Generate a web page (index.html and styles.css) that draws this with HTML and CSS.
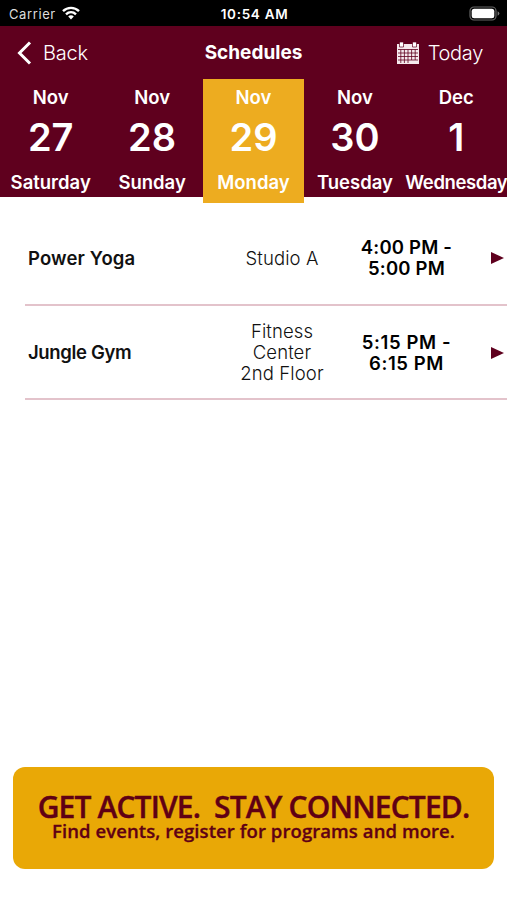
FILE: index.html
```
<!DOCTYPE html>
<html lang="en">
<head>
    <meta charset="UTF-8">
    <meta name="viewport" content="width=device-width, initial-scale=1.0">
    <title>Schedules</title>
    <link rel="stylesheet" href="styles.css">
</head>
<body>
    <div class="status-bar">
        <div class="carrier">
            <span>Carrier</span>
            <svg width="18" height="14" viewBox="0 0 18 14" fill="none" stroke="#fff" stroke-width="2.4">
                <path d="M1 5.2C5.5 .8 12.5 .8 17 5.2"/>
                <path d="M4 8.3C6.9 5.5 11.1 5.5 14 8.3"/>
                <path d="M6.2 10.4C7.8 8.9 10.2 8.9 11.8 10.4L9 13.4Z" fill="#fff" stroke="none"/>
            </svg>
        </div>
        <div class="clock">10:54 AM</div>
        <div class="battery">
            <svg width="31" height="15" viewBox="0 0 31 15">
                <rect x="1" y="1" width="26" height="13" rx="4" fill="none" stroke="#666" stroke-width="1.2"/>
                <rect x="2.7" y="2.7" width="22.6" height="9.6" rx="2.5" fill="#fff"/>
                <path d="M28.6 5.2Q30.4 6 30.4 7.5T28.6 9.8Z" fill="#777"/>
            </svg>
        </div>
    </div>

    <header class="header">
        <nav class="nav">
            <a class="back">
                <svg width="15" height="24" viewBox="0 0 15 24">
                    <path d="M13 1.5L2.5 12L13 22.5" fill="none" stroke="#fff" stroke-width="3"/>
                </svg>
                <span>Back</span>
            </a>
            <h1>Schedules</h1>
            <a class="today">
                <svg width="24" height="24" viewBox="0 0 24 24">
                    <path d="M1 3H23V23H1Z" fill="#f5e9ed"/>
                    <path d="M3.5 1H7.5V6H3.5ZM16.5 1H20.5V6H16.5Z" fill="#fff" stroke="#5f001e" stroke-width=".7"/>
                    <path d="M2 8.5H22M2 12H22M2 15.5H22M2 19H22M4.8 8.5V22M8.4 8.5V22M12 8.5V22M15.6 8.5V19M19.2 8.5V19" stroke="#5f001e" stroke-width=".8" fill="none"/>
                </svg>
                <span>Today</span>
            </a>
        </nav>

        <div class="days">
            <div class="day">
                <span>Nov</span>
                <span class="number">27</span>
                <span>Saturday</span>
            </div>
            <div class="day">
                <span>Nov</span>
                <span class="number">28</span>
                <span>Sunday</span>
            </div>
            <div class="day selected">
                <span>Nov</span>
                <span class="number">29</span>
                <span>Monday</span>
            </div>
            <div class="day">
                <span>Nov</span>
                <span class="number">30</span>
                <span>Tuesday</span>
            </div>
            <div class="day">
                <span>Dec</span>
                <span class="number">1</span>
                <span class="long">Wednesday</span>
            </div>
        </div>
    </header>

    <main class="schedule">
        <div class="event">
            <div class="name">Power Yoga</div>
            <div class="place">Studio A</div>
            <div class="time">4:00 PM -<br>5:00 PM</div>
            <svg class="arrow" width="13" height="12" viewBox="0 0 13 12"><path d="M0 0L13 6L0 12Z" fill="#5f001e"/></svg>
        </div>
        <div class="event">
            <div class="name gym">Jungle Gym</div>
            <div class="place">Fitness<br>Center<br>2nd Floor</div>
            <div class="time narrow">5:15 PM -<br>6:15 PM</div>
            <svg class="arrow" width="13" height="12" viewBox="0 0 13 12"><path d="M0 0L13 6L0 12Z" fill="#5f001e"/></svg>
        </div>
    </main>

    <footer class="banner">
        <div class="banner-title">GET ACTIVE.&nbsp; STAY CONNECTED.</div>
        <div class="banner-text">Find events, register for programs and more.</div>
    </footer>
</body>
</html>
```
FILE: styles.css
```
* {
    box-sizing: border-box;
}
body {
    margin: 0;
    height: 900px;
    display: flex;
    flex-direction: column;
    overflow: hidden;
    background-color: #fff;
    font-family: Inter, "Liberation Sans", sans-serif;
    color: #111;
}
.status-bar {
    display: grid;
    grid-template-columns: 1fr auto 1fr;
    align-items: center;
    height: 26px;
    padding: 1px 7px 0 9px;
    background-color: #000;
    color: #fff;
    font-size: 13px;
}
.carrier {
    display: flex;
    align-items: center;
    gap: 6px;
    color: #ddd;
    letter-spacing: 0.6px;
}
.carrier svg {
    margin-top: -2px;
}
.clock {
    font-size: 13.5px;
    font-weight: 600;
    letter-spacing: 0.7px;
}
.battery {
    display: flex;
    justify-content: flex-end;
}
.header {
    height: 171px;
    background-color: #5f001e;
    color: #fff;
}
.nav {
    display: grid;
    grid-template-columns: 1fr auto 1fr;
    align-items: center;
    height: 53px;
    padding: 0 17px;
    font-size: 20px;
}
.nav h1 {
    margin: 0;
    font-size: 19px;
    font-weight: 700;
}
.back, .today {
    display: flex;
    align-items: center;
    font-weight: 300;
}
.back {
    gap: 11px;
    letter-spacing: -0.2px;
}
.today {
    justify-content: flex-end;
    gap: 8px;
    padding-right: 7px;
    letter-spacing: -0.3px;
}
.days {
    display: grid;
    grid-template-columns: repeat(5, minmax(0, 1fr));
}
.day {
    display: flex;
    flex-direction: column;
    align-items: center;
    height: 124px;
    padding-top: 6px;
    font-size: 18.5px;
    font-weight: 600;
    line-height: 24px;
    white-space: nowrap;
}
.day .number {
    height: 61px;
    font-size: 38px;
    font-weight: 600;
    line-height: 57px;
}
.day .long {
    letter-spacing: -0.4px;
}
.selected {
    background-color: #edac20;
}
.schedule {
    margin-left: 25px;
    padding-top: 14px;
}
.event {
    display: grid;
    grid-template-columns: 199px 110px 139px 1fr;
    align-items: center;
    height: 94.5px;
    padding: 2px 0 0 3px;
    border-bottom: 2px solid #e3c3cb;
    font-size: 18.5px;
    line-height: 21px;
}
.name {
    font-weight: 600;
    letter-spacing: 0.15px;
}
.gym {
    letter-spacing: -0.35px;
}
.place {
    text-align: center;
    font-weight: 300;
    letter-spacing: 0.1px;
}
.time {
    text-align: center;
    font-weight: 600;
    letter-spacing: 0.2px;
    color: #000;
}
.narrow {
    letter-spacing: 0.6px;
}
.arrow {
    margin-left: 15px;
}
.banner {
    height: 102px;
    margin: auto 13px 31px;
    padding-top: 23px;
    border-radius: 12px;
    background-color: #e9a806;
    color: #5f0014;
    font-family: "Open Sans", "Noto Sans", sans-serif;
    text-align: center;
    white-space: nowrap;
}
.banner-title {
    font-size: 30px;
    font-weight: 600;
    line-height: 33px;
    letter-spacing: -0.85px;
    -webkit-text-stroke: 0.4px #5f0014;
}
.banner-text {
    font-size: 18.5px;
    font-weight: 600;
    line-height: 15px;
    letter-spacing: 0.08px;
    -webkit-text-stroke: 0.3px #5f0014;
}
```
